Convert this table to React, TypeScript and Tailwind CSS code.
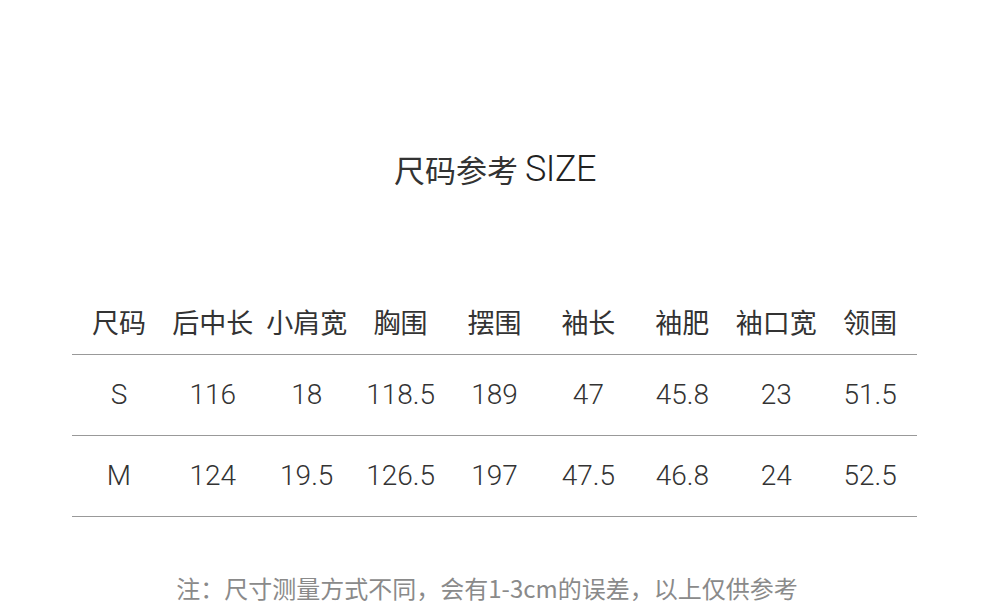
import React from "react";

const headers = ["尺码", "后中长", "小肩宽", "胸围", "摆围", "袖长", "袖肥", "袖口宽", "领围"];
const rows = [
  ["S", "116", "18", "118.5", "189", "47", "45.8", "23", "51.5"],
  ["M", "124", "19.5", "126.5", "197", "47.5", "46.8", "24", "52.5"],
];

export default function App() {
  return (
    <div className="w-[990px] h-[601px] overflow-hidden bg-white flex flex-col items-center">
      <div className="mt-[149px] h-[40px] leading-[40px] text-[31px] text-[#333] flex items-center font-['Noto_Sans_CJK_SC',sans-serif]">
        <span>尺码参考</span>
        <span className="ml-[7px] text-[36px] font-light font-['Roboto','Liberation_Sans',sans-serif] tracking-[-0.5px] text-[#222]">
          SIZE
        </span>
      </div>
      <div className="mt-[99px] w-[845px] ml-[-1px]">
        <div className="h-[67px] grid grid-cols-9 items-center border-b border-[#999] text-[27px] text-[#333] font-['Noto_Sans_CJK_SC',sans-serif]">
          {headers.map((h) => (
            <div key={h} className="text-center leading-none">
              {h}
            </div>
          ))}
        </div>
        {rows.map((r, i) => (
          <div
            key={i}
            className="h-[81px] grid grid-cols-9 items-center border-b border-[#999] text-[28px] font-light text-[#333] font-['Roboto','Liberation_Sans',sans-serif]"
          >
            {r.map((c, j) => (
              <div key={j} className="text-center leading-none">
                {c}
              </div>
            ))}
          </div>
        ))}
      </div>
      <div className="mt-[56px] mr-[16px] leading-[30px] text-[24px] text-[#8a8a8a] whitespace-nowrap font-['Noto_Sans_CJK_SC',sans-serif]">
        注：尺寸测量方式不同，会有1-3cm的误差，以上仅供参考
      </div>
    </div>
  );
}
